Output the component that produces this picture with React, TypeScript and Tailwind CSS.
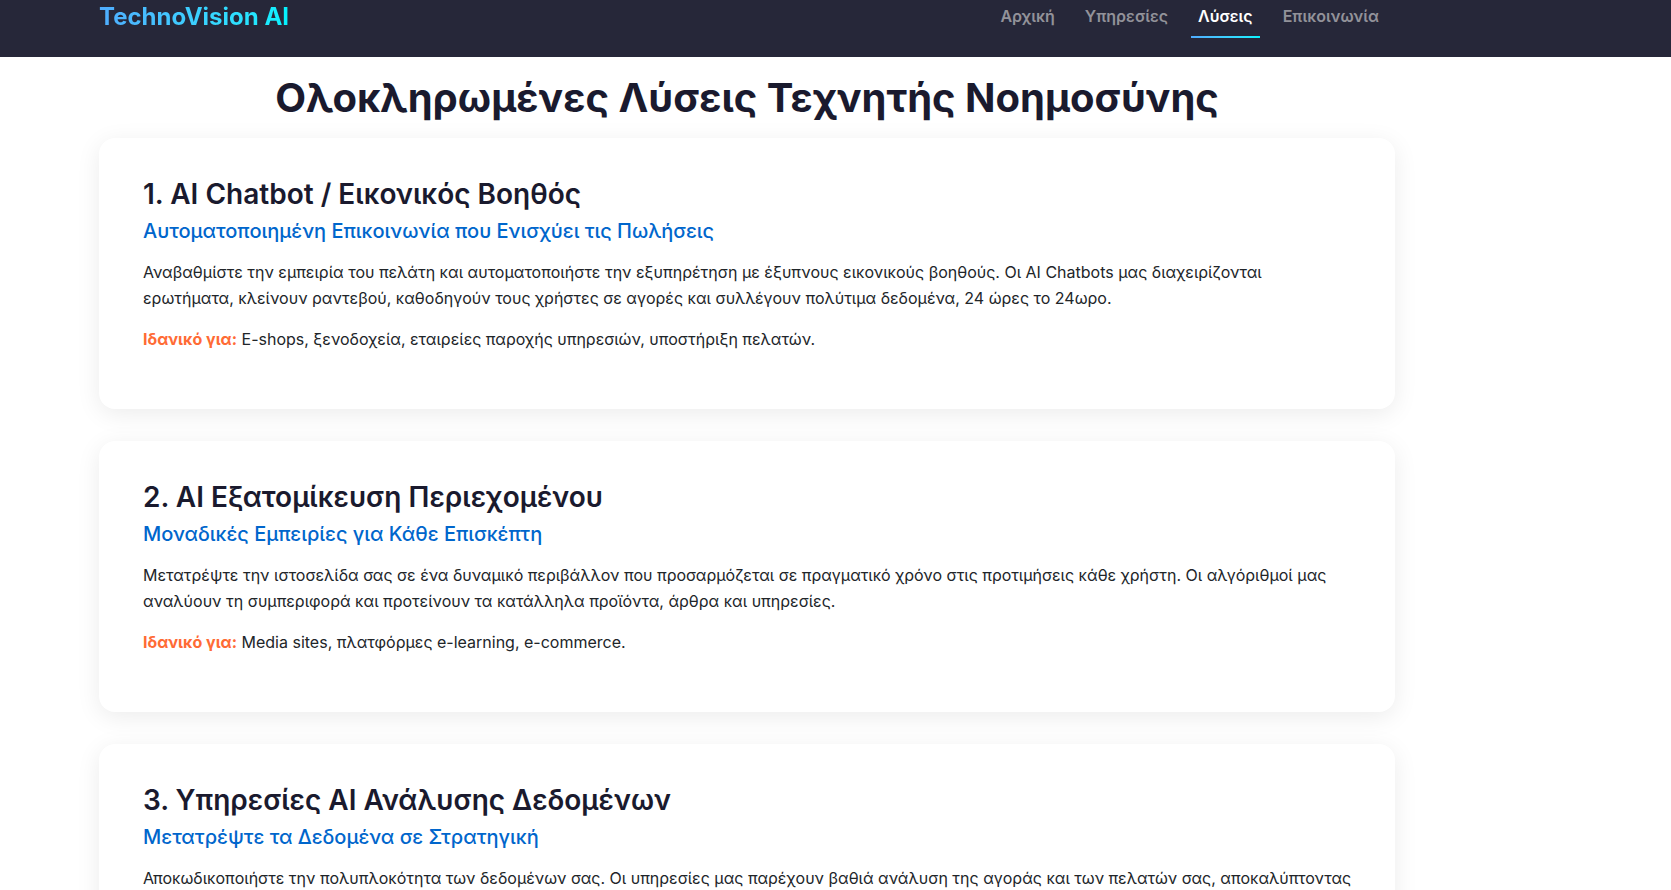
const navItems = [
  { label: "Αρχική", active: false },
  { label: "Υπηρεσίες", active: false },
  { label: "Λύσεις", active: true },
  { label: "Επικοινωνία", active: false },
];

const solutions = [
  {
    title: "1. AI Chatbot / Εικονικός Βοηθός",
    subtitle: "Αυτοματοποιημένη Επικοινωνία που Ενισχύει τις Πωλήσεις",
    text: "Αναβαθμίστε την εμπειρία του πελάτη και αυτοματοποιήστε την εξυπηρέτηση με έξυπνους εικονικούς βοηθούς. Οι AI Chatbots μας διαχειρίζονται ερωτήματα, κλείνουν ραντεβού, καθοδηγούν τους χρήστες σε αγορές και συλλέγουν πολύτιμα δεδομένα, 24 ώρες το 24ωρο.",
    ideal: "E-shops, ξενοδοχεία, εταιρείες παροχής υπηρεσιών, υποστήριξη πελατών.",
  },
  {
    title: "2. AI Εξατομίκευση Περιεχομένου",
    subtitle: "Μοναδικές Εμπειρίες για Κάθε Επισκέπτη",
    text: "Μετατρέψτε την ιστοσελίδα σας σε ένα δυναμικό περιβάλλον που προσαρμόζεται σε πραγματικό χρόνο στις προτιμήσεις κάθε χρήστη. Οι αλγόριθμοί μας αναλύουν τη συμπεριφορά και προτείνουν τα κατάλληλα προϊόντα, άρθρα και υπηρεσίες.",
    ideal: "Media sites, πλατφόρμες e-learning, e-commerce.",
  },
  {
    title: "3. Υπηρεσίες AI Ανάλυσης Δεδομένων",
    subtitle: "Μετατρέψτε τα Δεδομένα σε Στρατηγική",
    text: "Αποκωδικοποιήστε την πολυπλοκότητα των δεδομένων σας. Οι υπηρεσίες μας παρέχουν βαθιά ανάλυση της αγοράς και των πελατών σας, αποκαλύπτοντας",
    ideal: null,
  },
];

export default function App() {
  return (
    <div className="min-h-screen bg-white font-['Inter',sans-serif] text-[#1a1a2e]">
      <header className="bg-[#262739] pb-[19px]">
        <div className="ml-[99px] flex max-w-[1296px] items-start justify-between pr-[9px]">
          <a
            href="#"
            className="bg-linear-to-r from-[#4facfe] to-[#00f2fe] bg-clip-text text-2xl leading-[34px] font-bold text-transparent"
          >
            TechnoVision AI
          </a>
          <nav className="flex gap-4">
            {navItems.map((item) => (
              <a
                key={item.label}
                href="#"
                aria-current={item.active ? "page" : undefined}
                className={item.active ? "font-semibold text-white" : "font-semibold text-[#929299]"}
              >
                <span className="block px-[7px] pb-1 leading-8">{item.label}</span>
                {item.active && <span className="block h-0.5 bg-linear-to-r from-[#4facfe] to-[#00f2fe]" />}
              </a>
            ))}
          </nav>
        </div>
      </header>
      <main className="ml-[99px] max-w-[1296px]">
        <h1 className="pt-[17px] pb-4 text-center text-[40px] leading-[48px] font-bold">
          Ολοκληρωμένες Λύσεις Τεχνητής Νοημοσύνης
        </h1>
        <div className="flex flex-col gap-8">
          {solutions.map((s) => (
            <section
              key={s.title}
              className="rounded-2xl bg-white pt-10 pr-[42px] pb-[57px] pl-11 shadow-[0_5px_25px_rgba(0,0,0,0.08)]"
            >
              <h2 className="text-[28px] leading-8 font-semibold">{s.title}</h2>
              <h3 className="mt-2 text-xl leading-[26px] font-medium text-[#0066cc]">{s.subtitle}</h3>
              <p className="mt-[15px] leading-[26px] text-[#212529]">{s.text}</p>
              {s.ideal && (
                <p className="mt-[15px] leading-[26px] text-[#212529]">
                  <strong className="font-bold text-[#ff6b35]">Ιδανικό για:</strong> {s.ideal}
                </p>
              )}
            </section>
          ))}
        </div>
      </main>
    </div>
  );
}
